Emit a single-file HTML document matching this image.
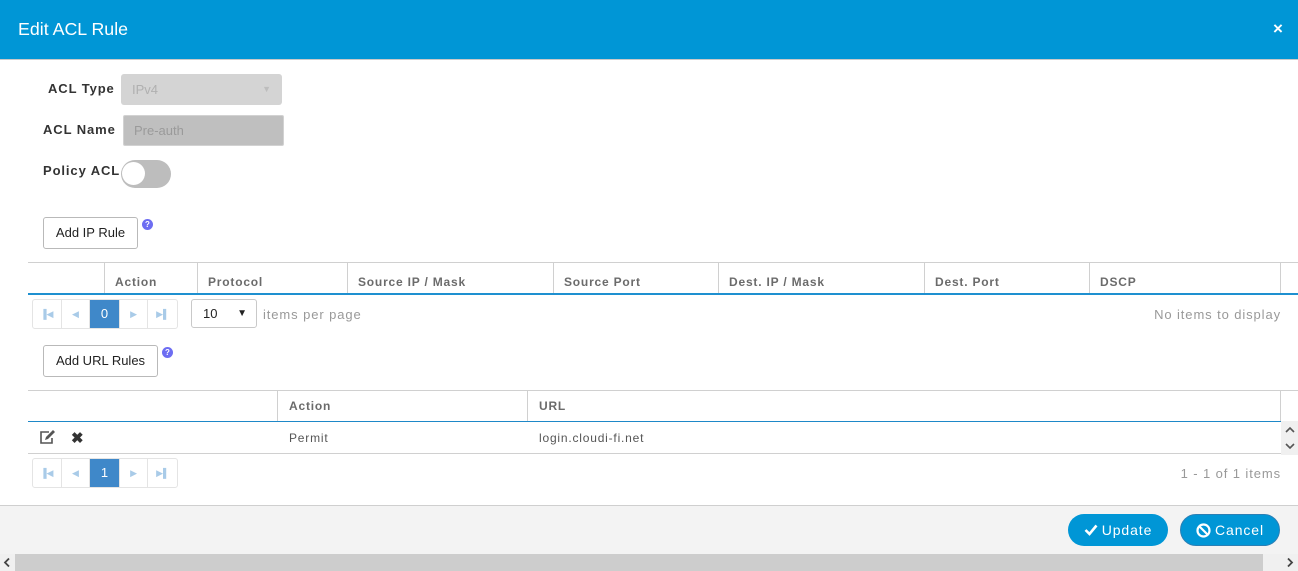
<!DOCTYPE html>
<html><head><style>
*{box-sizing:border-box;margin:0;padding:0}
body{width:1298px;height:571px;overflow:hidden;background:#fff;font-family:"Liberation Sans",sans-serif;position:relative}
.a{position:absolute}
.hdr{left:0;top:0;width:1298px;height:60px;background:#0096d6;border-bottom:1px solid #c9c9c9}
.lbl{font-weight:bold;font-size:13px;color:#333;letter-spacing:.9px}
.btn{border:1px solid #b9b9b9;border-radius:3px;background:#fff;font-size:13px;color:#222;text-align:center;line-height:29px}
.line{background:#d0d0d0}
.th{font-size:12px;font-weight:bold;color:#6b6b6b;letter-spacing:.8px}
.vl{width:1px;background:#d0d0d0}
.pg{border:1px solid #e4e4e4;border-radius:3px;height:30px;width:146px;display:flex}
.pg div{width:29px;border-right:1px solid #e4e4e4;color:#a9cbe8;font-size:9px;text-align:center;line-height:28px}
.pg div:last-child{border-right:none}
.pg .on{background:#3f88c9;color:#fff;font-size:13px}
.gray{font-size:13px;color:#999;letter-spacing:.9px}
.pill{background:#0096d6;border-radius:16px;color:#fff;font-size:14px;letter-spacing:.9px;line-height:32px;height:32px;width:100px;display:flex;align-items:center;justify-content:center;gap:4px}
</style></head><body>
<div class="a hdr"></div>
<div class="a" style="left:18px;top:19px;color:#fff;font-size:17.8px">Edit ACL Rule</div>
<div class="a" style="left:1273px;top:19px;color:#fff;font-size:17px;font-weight:bold">×</div>

<div class="a lbl" style="left:48px;top:81px">ACL Type</div>
<div class="a" style="left:121px;top:74px;width:161px;height:31px;background:#d4d4d4;border-radius:3px;color:#b0b0b0;font-size:13px;padding:8px 11px">IPv4<span style="position:absolute;right:11px;top:10px;font-size:9px;color:#bdbdbd">▼</span></div>
<div class="a lbl" style="left:43px;top:122px">ACL Name</div>
<div class="a" style="left:123px;top:115px;width:161px;height:31px;background:#bfbfbf;border:1px solid #d2d2d2;border-radius:2px;color:#9a9a9a;font-size:13px;padding:7px 10px">Pre-auth</div>
<div class="a lbl" style="left:43px;top:163px">Policy ACL</div>
<div class="a" style="left:121px;top:160px;width:50px;height:28px;background:#bdbdbd;border-radius:14px"></div>
<div class="a" style="left:122px;top:162px;width:23px;height:23px;background:#fff;border-radius:50%"></div>

<div class="a btn" style="left:43px;top:217px;width:95px;height:32px">Add IP Rule</div>
<div class="a" style="left:142px;top:219px;width:11px;height:11px;border-radius:50%;background:#6d6df2;color:#fff;font-size:8px;font-weight:bold;text-align:center;line-height:11px">?</div>

<div class="a line" style="left:28px;top:262px;width:1270px;height:1px"></div>
<div class="a" style="left:28px;top:293px;width:1270px;height:2px;background:#1e90d0"></div>
<div class="a vl" style="left:104px;top:262px;height:31px"></div>
<div class="a vl" style="left:197px;top:262px;height:31px"></div>
<div class="a vl" style="left:347px;top:262px;height:31px"></div>
<div class="a vl" style="left:553px;top:262px;height:31px"></div>
<div class="a vl" style="left:718px;top:262px;height:31px"></div>
<div class="a vl" style="left:924px;top:262px;height:31px"></div>
<div class="a vl" style="left:1089px;top:262px;height:31px"></div>
<div class="a vl" style="left:1280px;top:262px;height:31px"></div>
<div class="a th" style="left:115px;top:275px">Action</div>
<div class="a th" style="left:208px;top:275px">Protocol</div>
<div class="a th" style="left:358px;top:275px">Source IP / Mask</div>
<div class="a th" style="left:564px;top:275px">Source Port</div>
<div class="a th" style="left:729px;top:275px">Dest. IP / Mask</div>
<div class="a th" style="left:935px;top:275px">Dest. Port</div>
<div class="a th" style="left:1100px;top:275px">DSCP</div>

<div class="a pg" style="left:32px;top:299px"><div>▐◀</div><div>◀</div><div class="on" style="width:30px">0</div><div>▶</div><div>▶▌</div></div>
<div class="a" style="left:191px;top:299px;width:66px;height:29px;border:1px solid #c9c9c9;border-radius:3px;font-size:13px;padding:6px 11px;color:#222">10<span style="position:absolute;right:9px;top:8px;font-size:10px">▼</span></div>
<div class="a gray" style="left:263px;top:307px">items per page</div>
<div class="a gray" style="right:17px;top:307px">No items to display</div>

<div class="a btn" style="left:43px;top:345px;width:115px;height:32px">Add URL Rules</div>
<div class="a" style="left:162px;top:347px;width:11px;height:11px;border-radius:50%;background:#6d6df2;color:#fff;font-size:8px;font-weight:bold;text-align:center;line-height:11px">?</div>

<div class="a line" style="left:28px;top:390px;width:1270px;height:1px"></div>
<div class="a" style="left:28px;top:421px;width:1253px;height:1px;background:#1e88c8"></div>
<div class="a vl" style="left:277px;top:390px;height:31px"></div>
<div class="a vl" style="left:527px;top:390px;height:31px"></div>
<div class="a vl" style="left:1280px;top:390px;height:31px"></div>
<div class="a th" style="left:289px;top:399px">Action</div>
<div class="a th" style="left:539px;top:399px">URL</div>
<svg class="a" style="left:39px;top:430px" width="18" height="15" viewBox="0 0 18 15"><path d="M10 2H2v11h11V8" fill="none" stroke="#555" stroke-width="1.6"/><path d="M6 10l1-3 7-7 2 2-7 7z" fill="#555"/></svg>
<div class="a" style="left:71px;top:429px;font-size:15px;font-weight:bold;color:#333">✖</div>
<div class="a" style="left:289px;top:431px;font-size:12px;color:#555;letter-spacing:.8px">Permit</div>
<div class="a" style="left:539px;top:431px;font-size:12px;color:#555;letter-spacing:.8px">login.cloudi-fi.net</div>
<div class="a" style="left:1281px;top:421px;width:17px;height:34px;background:#f0f0f0"></div>
<svg class="a" style="left:1284px;top:424px" width="12" height="28" viewBox="0 0 12 28"><path d="M2 8l4-4 4 4M2 20l4 4 4-4" fill="none" stroke="#555" stroke-width="1.6"/></svg>
<div class="a line" style="left:28px;top:453px;width:1253px;height:1px"></div>

<div class="a pg" style="left:32px;top:458px"><div>▐◀</div><div>◀</div><div class="on" style="width:30px">1</div><div>▶</div><div>▶▌</div></div>
<div class="a gray" style="right:17px;top:466px">1 - 1 of 1 items</div>

<div class="a" style="left:0;top:505px;width:1298px;height:49px;background:#f3f3f3;border-top:1px solid #cfcfcf"></div>
<div class="a pill" style="left:1068px;top:514px"><svg width="14" height="12" viewBox="0 0 14 12"><path d="M1.5 6l4 4 7-8.5" fill="none" stroke="#fff" stroke-width="2.6"/></svg>Update</div>
<div class="a pill" style="left:1180px;top:514px;border:1px solid #2a7fb5"><svg width="15" height="15" viewBox="0 0 15 15"><circle cx="7.5" cy="7.5" r="6" fill="none" stroke="#fff" stroke-width="2.2"/><path d="M3.5 3.5l8 8" stroke="#fff" stroke-width="2.2"/></svg>Cancel</div>
<div class="a" style="left:0;top:554px;width:1298px;height:17px;background:#f0f0f0"></div>
<div class="a" style="left:15px;top:554px;width:1248px;height:17px;background:#cdcdcd"></div>
<svg class="a" style="left:3px;top:557px" width="8" height="11" viewBox="0 0 8 11"><path d="M6 1.5l-4 4 4 4" fill="none" stroke="#444" stroke-width="1.8"/></svg>
<svg class="a" style="left:1286px;top:557px" width="8" height="11" viewBox="0 0 8 11"><path d="M2 1.5l4 4-4 4" fill="none" stroke="#444" stroke-width="1.8"/></svg>
</body></html>
